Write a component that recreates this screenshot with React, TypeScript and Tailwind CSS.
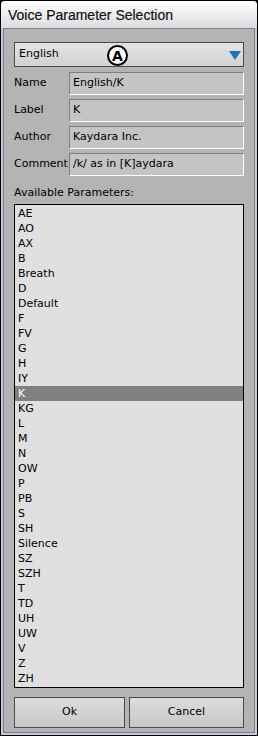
import React from "react";

const params = [
  "AE", "AO", "AX", "B", "Breath", "D", "Default", "F", "FV", "G", "H", "IY", "K", "KG", "L", "M",
  "N", "OW", "P", "PB", "S", "SH", "Silence", "SZ", "SZH", "T", "TD", "UH", "UW", "V", "Z", "ZH",
];

const fields = [
  { label: "Name", value: "English/K" },
  { label: "Label", value: "K" },
  { label: "Author", value: "Kaydara Inc." },
  { label: "Comment", value: "/k/ as in [K]aydara" },
];

const font = { fontFamily: "Tahoma, 'DejaVu Sans', sans-serif" };

export default function App() {
  return (
    <div className="w-[258px] h-[736px] bg-black p-px" style={font}>
      <div className="flex flex-col h-full bg-[#c9c9dc] rounded-t-[4px]">
        {/* title bar */}
        <div
          className="h-[27px] flex items-center pl-[7px] pt-[2px] bg-gradient-to-b from-white to-[#dcdce0] rounded-t-[4px] text-[14px] text-[#111]"
          style={{ fontFamily: "'Liberation Sans', Arial, sans-serif", WebkitTextStroke: "0.2px #111" }}
        >
          Voice Parameter Selection
        </div>
        <div className="flex-1 mx-[2px] mb-[2px] border border-[#7c7c84] bg-[#b4b4b4] px-[10px] pt-[13px] flex flex-col text-[11px]">
          {/* dropdown */}
          <div className="relative h-[25px] border border-[#4a4a4a] bg-gradient-to-b from-[#e4e4e4] to-[#d2d2d2] flex items-center justify-between pl-[4px] pr-[2px]">
            <span>English</span>
            <svg width="12" height="10" viewBox="0 0 12 10">
              <polygon points="0,1 12,1 6,10" fill="#1b73b8" />
            </svg>
            <div className="absolute left-[92px] top-[2px] w-[21px] h-[21px] rounded-full border-[2px] border-black bg-white flex items-center justify-center font-bold text-[14px] leading-none">
              A
            </div>
          </div>
          {/* fields */}
          <div className="flex flex-col gap-[4px] mt-[5px]">
            {fields.map((f) => (
              <div key={f.label} className="flex items-center h-[23px]">
                <span className="w-[55px]">{f.label}</span>
                <div className="flex-1 h-full flex items-center pl-[3px] bg-[#c4c4c4] border-t border-l border-[#7e7e7e] border-b-white border-r-white border-b border-r">
                  {f.value}
                </div>
              </div>
            ))}
          </div>
          <div className="mt-[10px] mb-[5px] h-[13px] leading-[13px]">Available Parameters:</div>
          {/* list */}
          <div className="border border-black bg-[#e0e0e0] py-px">
            {params.map((p) => (
              <div
                key={p}
                className={
                  "h-[15px] leading-[15px] pl-[3px] " + (p === "K" ? "bg-[#808080] text-white" : "text-black")
                }
              >
                {p}
              </div>
            ))}
          </div>
          {/* buttons */}
          <div className="flex gap-[4px] mt-[9px]">
            <button className="w-[111px] h-[31px] border border-[#4a4a4a] bg-gradient-to-b from-[#dcdcdc] to-[#c8c8c8] text-[11px]">
              Ok
            </button>
            <button className="flex-1 h-[31px] border border-[#4a4a4a] bg-gradient-to-b from-[#dcdcdc] to-[#c8c8c8] text-[11px]">
              Cancel
            </button>
          </div>
        </div>
      </div>
    </div>
  );
}
